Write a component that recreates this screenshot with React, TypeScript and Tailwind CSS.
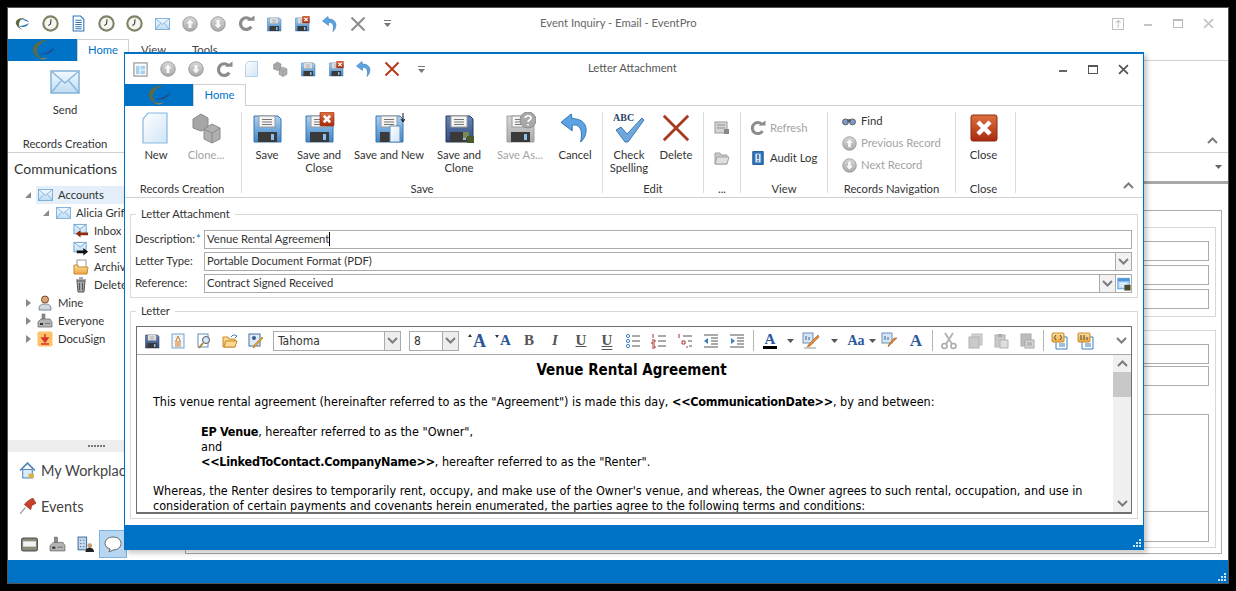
import React from "react";

const S = ({ s = 16, vb = 32, children, className = "" }: { s?: number; vb?: number; children?: React.ReactNode; className?: string }) => (
  <svg width={s} height={s} viewBox={`0 0 ${vb} ${vb}`} className={`block shrink-0 ${className}`}>{children}</svg>
);

const Defs = () => (
  <svg width="0" height="0" className="absolute">
    <defs>
      <linearGradient id="fb" x1="0" y1="0" x2="0" y2="1"><stop offset="0" stopColor="#a9d2f3" /><stop offset="1" stopColor="#3f86c8" /></linearGradient>
      <linearGradient id="fd" x1="0" y1="0" x2="0" y2="1"><stop offset="0" stopColor="#6d86b5" /><stop offset="1" stopColor="#2e4a80" /></linearGradient>
      <linearGradient id="fg" x1="0" y1="0" x2="0" y2="1"><stop offset="0" stopColor="#d8d8d8" /><stop offset="1" stopColor="#a8a8a8" /></linearGradient>
      <linearGradient id="pg" x1="0" y1="0" x2="1" y2="1"><stop offset="0" stopColor="#ffffff" /><stop offset="1" stopColor="#cfe4f6" /></linearGradient>
      <linearGradient id="rd" x1="0" y1="0" x2="0" y2="1"><stop offset="0" stopColor="#e0703f" /><stop offset="1" stopColor="#a92a10" /></linearGradient>
      <linearGradient id="ml" x1="0" y1="0" x2="0" y2="1"><stop offset="0" stopColor="#f3f9fe" /><stop offset="1" stopColor="#bcdcf4" /></linearGradient>
      <linearGradient id="yl" x1="0" y1="0" x2="0" y2="1"><stop offset="0" stopColor="#fde2a3" /><stop offset="1" stopColor="#eda63c" /></linearGradient>
    </defs>
  </svg>
);

const RedX = ({ x = 17, y = 0, w = 14 }: { x?: number; y?: number; w?: number }) => (
  <g>
    <rect x={x} y={y} width={w} height={w} rx="1" fill="url(#rd)" stroke="#8a2a10" strokeWidth="0.6" />
    <path d={`M${x + w * 0.27} ${y + w * 0.27}L${x + w * 0.73} ${y + w * 0.73}M${x + w * 0.73} ${y + w * 0.27}L${x + w * 0.27} ${y + w * 0.73}`} stroke="#fff" strokeWidth="2.6" />
  </g>
);

const Floppy = ({ s = 32, fill = "url(#fb)", edge = "#3d75ad", extra }: { s?: number; fill?: string; edge?: string; extra?: React.ReactNode }) => (
  <S s={s}>
    <path d="M3 4h24l3 3v23H3z" fill={fill} stroke={edge} />
    <rect x="8" y="4" width="16" height="11" fill="#f5f5f5" stroke="#9a9a9a" />
    <path d="M11 7.5h10M11 10h10M11 12.5h10" stroke="#777" />
    <rect x="7" y="20" width="19" height="10" fill="#3a3a3a" />
    <rect x="20" y="22" width="3" height="6" fill="#8fc0ea" />
    {extra}
  </S>
);

const Mail = ({ s = 16, h, stroke = "#6ea4d2" }: { s?: number; h?: number; stroke?: string }) => (
  <svg width={s} height={h ?? s * 0.8} viewBox="0 0 30 24" className="block shrink-0">
    <rect x="1" y="1" width="28" height="22" fill="url(#ml)" stroke={stroke} strokeWidth="1.6" />
    <path d="M1 1l14 12L29 1M1 23l10-12M29 23L19 11" fill="none" stroke={stroke} strokeWidth="1.4" />
  </svg>
);

const Clock = () => (
  <S s={17}>
    <circle cx="16" cy="16" r="13.5" fill="#f6f6f0" stroke="#7d8468" strokeWidth="4" />
    <path d="M17 8l-1 9-4 3" fill="none" stroke="#444" strokeWidth="2.2" />
  </S>
);

const Round = ({ dir = "up", s = 16 }: { dir?: string; s?: number }) => (
  <S s={s}>
    <circle cx="16" cy="16" r="14.5" fill="url(#fg)" stroke="#8a8a8a" strokeWidth="1.5" />
    {dir === "up" ? (
      <path d="M16 7l7 8h-4v9h-6v-9H9z" fill="#fff" fillOpacity=".9" />
    ) : (
      <path d="M16 25l7-8h-4V8h-6v9H9z" fill="#fff" fillOpacity=".9" />
    )}
  </S>
);

const RefreshI = ({ s = 18 }: { s?: number }) => (
  <S s={s}>
    <path d="M25 22a11 11 0 1 1 -1-13" fill="none" stroke="#8c8c8c" strokeWidth="6" />
    <path d="M17 11h14V1z" fill="#8c8c8c" />
  </S>
);

const UndoI = ({ s = 16 }: { s?: number }) => (
  <S s={s}>
    <path d="M12 1L1 10l12 9v-6c7-1 12 3 9 18 9-8 9-25-9-25z" fill="#5ba3e2" stroke="#2f6fb1" strokeWidth="1" />
  </S>
);

const XI = ({ s = 16, c = "#8c8c8c", w = 4 }: { s?: number; c?: string; w?: number }) => (
  <S s={s}>
    <path d="M3 3l26 26M29 3L3 29" stroke={c} strokeWidth={w} />
  </S>
);

const NewI = ({ s = 32 }: { s?: number }) => (
  <S s={s}>
    <path d="M8 1h19v30H3V7z" fill="url(#pg)" stroke="#8bb8df" strokeWidth="1.2" />
  </S>
);

const CloneI = ({ s = 32 }: { s?: number }) => (
  <S s={s}>
    <path d="M3 7l8-5 7 4v10l-7 3-8-3z" fill="#a6a6a6" stroke="#8a8a8a" />
    <path d="M14 17l8-5 8 4v11l-8 4-8-4z" fill="#b0b0b0" stroke="#8a8a8a" />
    <path d="M14 17l8 4 8-5M22 21v10" fill="none" stroke="#8a8a8a" />
  </S>
);

const Machine = ({ s = 16 }: { s?: number }) => (
  <S s={s} vb={16}>
    <rect x="5" y="1" width="3" height="6" fill="#8a8a8a" stroke="#666" strokeWidth=".5" />
    <path d="M1 9l3-3h9l2 3v5H1z" fill="#b4b4b4" stroke="#6f6f6f" strokeWidth=".8" />
    <rect x="3" y="10" width="3" height="2" fill="#333" />
    <rect x="8" y="10" width="5" height="1" fill="#777" />
  </S>
);

const Chevron = ({ up = false, c = "#7d7d7d" }: { up?: boolean; c?: string }) => (
  <svg width="11" height="7" viewBox="0 0 11 7" className="block">
    <path d={up ? "M1 6l4.5-4.5L10 6" : "M1 1l4.5 4.5L10 1"} fill="none" stroke={c} strokeWidth="2" />
  </svg>
);

const DropTri = ({ c = "#555" }: { c?: string }) => (
  <svg width="7" height="4" viewBox="0 0 7 4" className="block"><path d="M0 0h7L3.5 4z" fill={c} /></svg>
);

const QatMore = () => (
  <svg width="7" height="7" viewBox="0 0 7 7" className="block"><path d="M0 0h7v1H0zM0 3h7L3.5 7z" fill="#777" /></svg>
);

const Grip = () => (
  <svg width="10" height="10" viewBox="0 0 10 10" className="block">
    <path d="M7 1h2v2H7zM4 4h2v2H4zM7 4h2v2H7zM1 7h2v2H1zM4 7h2v2H4zM7 7h2v2H7z" fill="#cfe3f5" />
  </svg>
);

const Logo = () => (
  <svg width="34" height="22" viewBox="0 0 34 22" className="block">
    <path d="M22 1C12 1 6 6 7 12c1 5 6 8 12 9-5-2-8-5-8-9 0-5 5-9 11-11z" fill="#5c6b45" />
    <path d="M13 15c5 0 11-3 16-7-2 5-8 9-16 7z" fill="#1f4f8f" />
    <path d="M13 19c4 1 7 0 9-1-3 3-6 3-9 1z" fill="#b08a3a" />
  </svg>
);

const Cell = ({ children, className = "w-[26px]" }: { children?: React.ReactNode; className?: string }) => (
  <div className={`flex items-center justify-center shrink-0 ${className}`}>{children}</div>
);

const WinBtn = ({ children }: { children: React.ReactNode }) => <Cell className="w-[30px]">{children}</Cell>;

const Minus = ({ c }: { c: string }) => <div className={`w-[8px] h-[2px] mt-[3px] ${c}`} />;
const MaxI = ({ c }: { c: string }) => <div className={`w-[10px] h-[9px] border border-t-2 ${c}`} />;

const RibbonBtn = ({ w, icon, label, dim = false }: { w: string; icon: React.ReactNode; label: React.ReactNode; dim?: boolean }) => (
  <div className={`flex flex-col items-center shrink-0 ${w}`}>
    <div className="h-[32px] flex items-center justify-center">{icon}</div>
    <div className={`mt-[4px] text-center leading-[13px] whitespace-nowrap ${dim ? "text-[#a3a3a3]" : "text-[#333]"}`}>{label}</div>
  </div>
);

const Group = ({ w, label, children, lp = "" }: { w: string; label: string; children: React.ReactNode; lp?: string }) => (
  <div className={`flex flex-col shrink-0 border-r border-[#dcdcdc] h-[81px] ${w}`}>
    <div className="flex flex-1">{children}</div>
    <div className={`text-center text-[#333] leading-[13px] h-[13px] mb-[-2px] ${lp}`}>{label}</div>
  </div>
);

const SmallRow = ({ icon, label, dim = false, pl = "pl-[14px]" }: { icon: React.ReactNode; label: string; dim?: boolean; pl?: string }) => (
  <div className={`flex items-center h-[22px] gap-[5px] whitespace-nowrap ${pl} ${dim ? "text-[#a3a3a3]" : "text-[#333]"}`}>
    <div className="w-[14px] flex justify-center">{icon}</div>
    {label}
  </div>
);

const Field = ({ label, value, caret, drop, extra }: { label: React.ReactNode; value: string; caret?: boolean; drop?: boolean; extra?: boolean }) => (
  <div className="flex items-center h-[19px]">
    <div className="w-[69px] ml-[-1px] text-[#333] whitespace-nowrap pb-[1px]">{label}</div>
    <div className="flex-1 h-[19px] border border-[#ababab] flex items-center">
      <div className="flex-1 pl-[2px] pb-[1px] text-[#333] whitespace-nowrap flex items-center">
        {value}
        {caret && <span className="w-px h-[14px] bg-black" />}
      </div>
      {drop && (
        <div className="w-[16px] h-full border-l border-[#ababab] bg-[#f2f2f2] flex items-center justify-center">
          <Chevron />
        </div>
      )}
      {extra && (
        <div className="w-[16px] h-full border-l border-[#ababab] flex items-center justify-center">
          <S s={14}>
            <rect x="2" y="3" width="26" height="24" fill="#bcdcf4" stroke="#4f97da" strokeWidth="2" />
            <rect x="2" y="3" width="26" height="7" fill="#4f97da" />
            <path d="M6 15h16M6 20h16" stroke="#fff" strokeWidth="2" />
            <rect x="17" y="18" width="14" height="13" fill="#4b4b25" />
          </S>
        </div>
      )}
    </div>
  </div>
);

const Legend = ({ children }: { children: string }) => (
  <div className="absolute left-[5px] top-[-8px] bg-white px-[5px] leading-[14px] text-[#333]">{children}</div>
);

const Sep = () => <div className="w-px h-[21px] bg-[#b5b5b5] shrink-0" />;

const Lines = ({ kind }: { kind: string }) => (
  <S s={16} vb={16}>
    {kind === "bul" && (
      <>
        <circle cx="3" cy="3" r="1.6" fill="none" stroke="#3f7fc0" />
        <circle cx="3" cy="8" r="1.6" fill="none" stroke="#3f7fc0" />
        <circle cx="3" cy="13" r="1.6" fill="none" stroke="#3f7fc0" />
        <path d="M7 3h8M7 8h8M7 13h8" stroke="#555" />
      </>
    )}
    {kind === "num" && (
      <>
        <path d="M2 1v4M1 7h3v2H1v2h3M1 13h3v2H1" fill="none" stroke="#a33" />
        <path d="M7 3h8M7 8h8M7 13h8" stroke="#555" />
      </>
    )}
    {kind === "multi" && (
      <>
        <path d="M2 1v4M5 8h3v3H5zM9 14h2" fill="none" stroke="#a33" />
        <path d="M6 3h9M11 8h4M12 13h3" stroke="#555" />
      </>
    )}
    {kind === "out" && (
      <>
        <path d="M1 2h14M8 5h7M8 8h7M8 11h7M1 14h14" stroke="#555" />
        <path d="M1 8l4-3v6z" fill="#3f7fc0" />
      </>
    )}
    {kind === "ind" && (
      <>
        <path d="M1 2h14M8 5h7M8 8h7M8 11h7M1 14h14" stroke="#555" />
        <path d="M6 8L2 5v6z" fill="#3f7fc0" />
      </>
    )}
  </S>
);

const TB = "font-['Liberation_Serif',serif] font-bold text-[#555] text-[15px] leading-none";

const Toolbar = () => (
  <div className="h-[28px] border-b border-[#a8a8a8] flex items-center pl-[2px] pr-[2px] font-['DejaVu_Sans_Condensed','DejaVu_Sans',sans-serif] text-[12px]">
    <Cell><Floppy s={16} fill="url(#fd)" edge="#222c44" /></Cell>
    <Cell>
      <S s={16} vb={16}>
        <rect x="2" y="1" width="12" height="14" fill="#eef5fc" stroke="#6ea4d2" />
        <path d="M8 3l-2.5 6h5zM5 11h6M5 13h6" fill="none" stroke="#d8761e" />
      </S>
    </Cell>
    <Cell>
      <S s={16} vb={16}>
        <rect x="2" y="1" width="10" height="13" fill="#fff" stroke="#5c8fbd" />
        <circle cx="10" cy="7" r="3.5" fill="#d3e8f8" stroke="#555" />
        <path d="M7 10l-4 5" stroke="#b5822c" strokeWidth="2" />
      </S>
    </Cell>
    <Cell>
      <S s={16} vb={16}>
        <path d="M1 4h5l1 2h6v8H1z" fill="url(#yl)" stroke="#c78a2f" />
        <path d="M4 8h11l-2 6H2z" fill="#fcd98f" stroke="#c78a2f" />
        <path d="M9 4c1-2 3-2 4-2l2 1-2 2" fill="none" stroke="#3f7fc0" />
      </S>
    </Cell>
    <Cell>
      <S s={16} vb={16}>
        <rect x="1" y="1" width="11" height="12" fill="#dcebf8" stroke="#4a6fa5" />
        <circle cx="6" cy="5" r="2" fill="#3b5a8c" />
        <path d="M15 5L7 14l-2 1 1-3 8-8z" fill="#e5a63c" stroke="#a4701c" strokeWidth=".6" />
      </S>
    </Cell>
    <div className="ml-[4px] w-[128px] h-[20px] border border-[#ababab] flex items-center">
      <div className="flex-1 pl-[4px] text-[#333]">Tahoma</div>
      <div className="w-[16px] h-full bg-[#eeeeee] border-l border-[#ababab] flex items-center justify-center"><Chevron /></div>
    </div>
    <div className="ml-[8px] w-[50px] h-[20px] border border-[#ababab] flex items-center">
      <div className="flex-1 pl-[4px] text-[#333]">8</div>
      <div className="w-[16px] h-full bg-[#eeeeee] border-l border-[#ababab] flex items-center justify-center"><Chevron /></div>
    </div>
    <Cell className="w-[26px] ml-[5px]">
      <div className="flex items-start">
        <div className="w-0 h-0 mt-[2px] mr-[1px] border-x-[2px] border-x-transparent border-b-[3px] border-b-[#333]" />
        <span className="font-['Liberation_Serif',serif] font-bold text-[#2b579a] text-[18px] leading-none">A</span>
      </div>
    </Cell>
    <Cell>
      <div className="flex items-start">
        <div className="w-0 h-0 mt-[2px] mr-[1px] border-x-[2px] border-x-transparent border-t-[3px] border-t-[#333]" />
        <span className="font-['Liberation_Serif',serif] font-bold text-[#2b579a] text-[15px] leading-none">A</span>
      </div>
    </Cell>
    <Cell><span className={TB}>B</span></Cell>
    <Cell><span className={`${TB} italic`}>I</span></Cell>
    <Cell><span className={`${TB} underline`}>U</span></Cell>
    <Cell><span className={`${TB} underline decoration-double`}>U</span></Cell>
    <Cell><Lines kind="bul" /></Cell>
    <Cell><Lines kind="num" /></Cell>
    <Cell><Lines kind="multi" /></Cell>
    <Cell><Lines kind="out" /></Cell>
    <Cell><Lines kind="ind" /></Cell>
    <div className="ml-[3px] mr-[3px]"><Sep /></div>
    <Cell>
      <div className="flex flex-col items-center">
        <span className="font-['Liberation_Serif',serif] font-bold text-[#2b579a] text-[15px] leading-[14px]">A</span>
        <div className="w-[14px] h-[3px] bg-black" />
      </div>
    </Cell>
    <Cell className="w-[15px]"><DropTri /></Cell>
    <Cell>
      <S s={18} vb={18}>
        <rect x="1" y="1" width="10" height="10" fill="#d6e6f6" stroke="#6f8fb3" />
        <path d="M4 8V4M7 8V5" stroke="#3a5f8a" />
        <path d="M16 3L7 12l-2 3 3-1 9-9z" fill="#e58a3c" stroke="#a55f1c" strokeWidth=".6" />
        <path d="M2 15h12v2H2z" fill="#c9c9c9" />
      </S>
    </Cell>
    <Cell className="w-[20px]"><DropTri /></Cell>
    <Cell className="w-[24px]"><span className="font-['Liberation_Serif',serif] font-bold text-[#2b579a] text-[14px] leading-none">Aa</span></Cell>
    <Cell className="w-[9px]"><DropTri /></Cell>
    <Cell>
      <S s={18} vb={18}>
        <rect x="1" y="1" width="10" height="10" fill="#d6e6f6" stroke="#6f8fb3" />
        <path d="M4 8V4M7 8V5" stroke="#3a5f8a" />
        <path d="M16 6l-6 6-3 3 1-3 5-6z" fill="#e58a3c" stroke="#a55f1c" strokeWidth=".6" />
      </S>
    </Cell>
    <Cell><span className="font-['Liberation_Serif',serif] font-bold text-[#2b579a] text-[17px] leading-none">A</span></Cell>
    <div className="ml-[3px] mr-[3px]"><Sep /></div>
    <Cell>
      <S s={18} vb={18}>
        <path d="M5 1l7 11M13 1L6 12" stroke="#b5b5b5" strokeWidth="2" />
        <circle cx="4.5" cy="14" r="2.5" fill="none" stroke="#aaa" strokeWidth="1.6" />
        <circle cx="13.5" cy="14" r="2.5" fill="none" stroke="#aaa" strokeWidth="1.6" />
      </S>
    </Cell>
    <Cell>
      <S s={16} vb={16}>
        <rect x="5" y="1" width="10" height="11" fill="#d2d2d2" stroke="#bbb" />
        <rect x="2" y="4" width="10" height="11" fill="#c9c9c9" stroke="#b2b2b2" />
      </S>
    </Cell>
    <Cell>
      <S s={16} vb={16}>
        <rect x="2" y="2" width="10" height="12" fill="#c9c9c9" stroke="#b2b2b2" />
        <rect x="5" y="1" width="4" height="3" fill="#aaa" />
        <rect x="7" y="7" width="8" height="8" fill="#dedede" stroke="#b2b2b2" />
      </S>
    </Cell>
    <Cell>
      <S s={16} vb={16}>
        <rect x="2" y="1" width="10" height="12" fill="#bdbdbd" stroke="#aaa" />
        <rect x="6" y="7" width="9" height="8" fill="#d5d5d5" stroke="#aaa" />
        <path d="M8 10h5M8 12h5" stroke="#999" />
      </S>
    </Cell>
    <div className="ml-[3px] mr-[3px]"><Sep /></div>
    <Cell>
      <S s={18} vb={18}>
        <path d="M7 5h9v12H5V8z" fill="#fff" stroke="#3f7fc0" />
        <rect x="1" y="1" width="12" height="9" rx="1" fill="url(#yl)" stroke="#c78a2f" />
        <path d="M5 3l-1.5 2.5L5 8M9 3l1.5 2.5L9 8" fill="none" stroke="#444" />
        <path d="M8 12h6M8 14h6" stroke="#3f7fc0" />
      </S>
    </Cell>
    <Cell>
      <S s={18} vb={18}>
        <path d="M7 5h9v12H5V8z" fill="#fff" stroke="#3f7fc0" />
        <rect x="1" y="1" width="12" height="9" rx="1" fill="url(#yl)" stroke="#c78a2f" />
        <path d="M4 3v5M7 3v5M10 5v3" fill="none" stroke="#444" />
        <path d="M8 12h6M8 14h6" stroke="#3f7fc0" />
      </S>
    </Cell>
    <div className="flex-1 flex justify-end pr-[2px]"><Chevron /></div>
  </div>
);

const Doc = () => (
  <div className="flex-1 flex min-h-0">
    <div className="flex-1 overflow-hidden pl-[16px] pt-[6px] font-['DejaVu_Sans_Condensed','DejaVu_Sans',sans-serif] text-black text-[12.5px] leading-[15px]">
      <div className="text-center font-bold text-[15px] leading-[18px] mb-[15px] pr-[3px]">Venue Rental Agreement</div>
      <div className="whitespace-nowrap">This venue rental agreement (hereinafter referred to as the "Agreement") is made this day, <b className="tracking-[-0.25px]">&lt;&lt;CommunicationDate&gt;&gt;</b>, by and between:</div>
      <div className="pl-[48px] mt-[15px] whitespace-nowrap">
        <div><b className="tracking-[-0.25px]">EP Venue</b>, hereafter referred to as the "Owner",</div>
        <div>and</div>
        <div><b className="tracking-[-0.25px]">&lt;&lt;LinkedToContact.CompanyName&gt;&gt;</b>, hereafter referred to as the "Renter".</div>
      </div>
      <div className="mt-[14px] whitespace-nowrap">
        <div>Whereas, the Renter desires to temporarily rent, occupy, and make use of the Owner's venue, and whereas, the Owner agrees to such rental, occupation, and use in</div>
        <div>consideration of certain payments and covenants herein enumerated, the parties agree to the following terms and conditions:</div>
      </div>
    </div>
    <div className="w-[18px] shrink-0 bg-[#f0f0f0] flex flex-col">
      <div className="h-[17px] flex items-center justify-center"><Chevron up /></div>
      <div className="h-[25px] bg-[#c8c8c8]" />
      <div className="flex-1" />
      <div className="h-[17px] flex items-center justify-center"><Chevron /></div>
    </div>
  </div>
);

const Dialog = () => (
  <div className="absolute left-[124px] top-[52px] w-[1020px] h-[498px] bg-white border border-[#0072c6] border-t-2 shadow-[3px_3px_5px_rgba(0,0,0,0.22)] flex flex-col">
    <div className="h-[30px] flex items-center pl-[1px] relative shrink-0">
      {[
        <S s={15} vb={16} key="a"><rect x="1" y="1" width="14" height="14" fill="#fff" stroke="#777" /><rect x="3" y="4" width="4" height="9" fill="#a8d1ee" /><rect x="8" y="4" width="5" height="4" fill="#a8d1ee" /><rect x="8" y="9" width="5" height="4" fill="#a8d1ee" /></S>,
        <Round key="b" dir="up" />,
        <Round key="c" dir="down" />,
        <RefreshI key="d" s={17} />,
        <NewI key="e" s={16} />,
        <CloneI key="f" s={16} />,
        <Floppy key="g" s={16} />,
        <Floppy key="h" s={16} extra={<RedX />} />,
        <UndoI key="i" />,
        <XI key="j" c="#b63a1c" />,
      ].map((ic, i) => (
        <Cell key={i} className="w-[28px]">{ic}</Cell>
      ))}
      <Cell className="w-[30px]"><QatMore /></Cell>
      <div className="absolute left-[463px] top-[6px] text-[#555] leading-[16px]">Letter Attachment</div>
      <div className="ml-auto flex items-center pr-[5px]">
        <WinBtn><Minus c="bg-[#666]" /></WinBtn>
        <WinBtn><MaxI c="border-[#555]" /></WinBtn>
        <WinBtn><XI s={11} c="#555" w={5} /></WinBtn>
      </div>
    </div>
    <div className="h-[22px] flex border-b border-[#d0d0d0] shrink-0">
      <div className="w-[68px] h-[22px] bg-[#0072c6] flex items-center justify-center"><Logo /></div>
      <div className="w-[53px] h-[22px] bg-white border border-b-0 border-[#d0d0d0] text-[#0072c6] flex items-center justify-center">Home</div>
    </div>
    <div className="h-[92px] shrink-0 border-b border-[#d0d0d0] flex items-start pt-[6px] relative">
      <div className="w-[6px]" />
      <Group w="w-[111px]" label="Records Creation" lp="pr-[8px]">
        <RibbonBtn w="w-[50px]" icon={<NewI />} label="New" />
        <RibbonBtn w="w-[50px]" icon={<CloneI />} label="Clone..." dim />
      </Group>
      <Group w="w-[361px]" label="Save">
        <RibbonBtn w="w-[50px]" icon={<Floppy />} label="Save" />
        <RibbonBtn w="w-[54px]" icon={<Floppy extra={<RedX />} />} label={<>Save and<br />Close</>} />
        <RibbonBtn w="w-[86px]" icon={<Floppy extra={<><path d="M17 14h10v16H17z" fill="url(#pg)" stroke="#5c8fbd" /><path d="M30 1v8M28 7l2 3 2-3" stroke="#111" fill="none" /></>} />} label="Save and New" />
        <RibbonBtn w="w-[54px]" icon={<Floppy fill="url(#fd)" edge="#27395f" extra={<><rect x="20" y="20" width="6" height="6" fill="#7a8a50" /><rect x="24" y="24" width="7" height="7" fill="#4c5a2b" /></>} />} label={<>Save and<br />Clone</>} />
        <RibbonBtn w="w-[68px]" icon={<Floppy fill="url(#fg)" edge="#a0a0a0" extra={<><circle cx="24" cy="8" r="8" fill="#a9a9a9" stroke="#8c8c8c" /><path d="M21 6c1-3 6-3 6 0 0 2-3 2-3 4M24 12v1.5" fill="none" stroke="#fff" strokeWidth="1.6" /></>} />} label="Save As..." dim />
        <RibbonBtn w="w-[42px]" icon={<UndoI s={30} />} label="Cancel" />
      </Group>
      <Group w="w-[101px]" label="Edit">
        <RibbonBtn
          w="w-[52px]"
          icon={
            <div className="relative w-[32px] h-[32px]">
              <svg width="32" height="32" viewBox="0 0 32 32" className="block"><path d="M3 18l5-3 6 7L29 6l2 2-16 22h-3z" fill="#6fa9dc" stroke="#3f78b5" /></svg>
              <span className="absolute left-0 top-0 text-[10px] leading-[11px] font-bold text-[#2b3f66] font-['Liberation_Serif',serif]">ABC</span>
            </div>
          }
          label={<>Check<br />Spelling</>}
        />
        <RibbonBtn w="w-[42px]" icon={<XI s={30} c="#a8391e" w={3} />} label="Delete" />
      </Group>
      <Group w="w-[37px]" label="...">
        <div className="w-full flex flex-col items-center pt-[8px] gap-[14px]">
          <S s={16} vb={16}>
            <rect x="1" y="2" width="12" height="11" fill="#d5d5d5" stroke="#9c9c9c" />
            <path d="M3 5h8M3 8h8" stroke="#8f8f8f" />
            <rect x="10" y="9" width="5" height="5" fill="#888" />
          </S>
          <S s={16} vb={16}>
            <path d="M1 3h5l1 2h6v9H1z" fill="#c8c8c8" stroke="#a3a3a3" />
            <path d="M3 7h12l-2 7H1z" fill="#dedede" stroke="#a3a3a3" />
          </S>
        </div>
      </Group>
      <Group w="w-[87px]" label="View">
        <div className="flex flex-col pt-[5px] gap-[8px]">
          <SmallRow icon={<RefreshI s={16} />} label="Refresh" dim pl="pl-[10px]" />
          <SmallRow
            icon={
              <S s={14} vb={16}>
                <rect x="2" y="0" width="12" height="16" rx="1" fill="#2f74b8" stroke="#1f4f8f" />
                <rect x="5" y="3" width="6" height="10" fill="#cfe4f6" />
                <path d="M8 4v5M8 10.5v1.5" stroke="#1f4f8f" strokeWidth="1.6" />
              </S>
            }
            label="Audit Log"
            pl="pl-[10px]"
          />
        </div>
      </Group>
      <Group w="w-[128px]" label="Records Navigation">
        <div className="flex flex-col mt-[-2px]">
          <SmallRow
            icon={
              <S s={14} vb={16}>
                <circle cx="4" cy="9" r="3.4" fill="#7d9bd0" stroke="#555" />
                <circle cx="12" cy="9" r="3.4" fill="#7d9bd0" stroke="#555" />
                <rect x="6" y="6" width="4" height="3" fill="#555" />
              </S>
            }
            label="Find"
          />
          <SmallRow icon={<Round dir="up" s={15} />} label="Previous Record" dim />
          <SmallRow icon={<Round dir="down" s={15} />} label="Next Record" dim />
        </div>
      </Group>
      <Group w="w-[60px]" label="Close" lp="pr-[4px]">
        <div className="w-full pr-[4px]">
          <RibbonBtn
            w="w-full"
            icon={
              <svg width="28" height="28" viewBox="0 0 28 28" className="block">
                <rect x="1" y="1" width="26" height="26" rx="2" fill="url(#rd)" stroke="#8a2a10" />
                <path d="M8 8l12 12M20 8L8 20" stroke="#fff" strokeWidth="4.5" />
              </svg>
            }
            label="Close"
          />
        </div>
      </Group>
      <div className="flex-1 flex justify-end items-end self-stretch pr-[9px] pb-[8px]"><Chevron up /></div>
    </div>
    <div className="flex-1 min-h-0 px-[5px] pt-[16px] flex flex-col">
      <div className="relative border border-[#d8d8d8] h-[84px] px-[5px] pt-[15px] flex flex-col gap-[3px] shrink-0">
        <Legend>Letter Attachment</Legend>
        <Field label={<>Description:<span className="text-[#0072c6] pl-[1px]">*</span></>} value="Venue Rental Agreement" caret />
        <Field label="Letter Type:" value="Portable Document Format (PDF)" drop />
        <Field label="Reference:" value="Contract Signed Received" drop extra />
      </div>
      <div className="relative border border-[#d8d8d8] mt-[13px] h-[208px] px-[5px] pt-[14px] pb-[4px] flex flex-col shrink-0">
        <Legend>Letter</Legend>
        <div className="flex-1 min-h-0 border border-[#707070] border-b-2 flex flex-col">
          <Toolbar />
          <Doc />
        </div>
      </div>
    </div>
    <div className="h-[24px] bg-[#0072c6] shrink-0 flex items-end justify-end pr-[1px] pb-[1px] mt-[6px]"><Grip /></div>
  </div>
);

const TreeRow = ({ pl, icon, label, arrow, sel = false }: { pl: string; icon: React.ReactNode; label: string; arrow?: "open" | "closed"; sel?: boolean }) => (
  <div className={`h-[18px] flex items-center whitespace-nowrap ${pl}`}>
    <div className="w-[10px] flex justify-center mr-[3px]">
      {arrow === "open" && <div className="w-0 h-0 border-l-[6px] border-l-transparent border-b-[6px] border-b-[#8a8a8a]" />}
      {arrow === "closed" && <div className="w-0 h-0 border-y-[4px] border-y-transparent border-l-[5px] border-l-[#8a8a8a]" />}
    </div>
    <div className={`flex items-center gap-[5px] h-full pl-[1px] pr-[8px] ${sel ? "bg-[#e4eff9] w-[90px]" : ""}`}>
      <div className="w-[16px] flex justify-center">{icon}</div>
      <span className="text-[#333]">{label}</span>
    </div>
  </div>
);

const MailArrow = ({ c, left }: { c: string; left: boolean }) => (
  <svg width="17" height="16" viewBox="0 0 17 16" className="block">
    <rect x="1" y="1" width="13" height="10" fill="url(#ml)" stroke="#6ea4d2" />
    <path d="M1 1l6.5 5L14 1" fill="none" stroke="#6ea4d2" />
    <path d={left ? "M3 11l5-4v2.5h8v3H8V15z" : "M16 11l-5-4v2.5H4v3h7V15z"} fill={c} />
  </svg>
);

const Sidebar = () => (
  <div className="w-[177px] shrink-0 flex flex-col">
    <div className="h-[31px] mb-[2px] flex items-center pl-[6px] text-[14px] text-[#333] whitespace-nowrap">Communications</div>
    <div className="h-[254px] overflow-hidden">
      <TreeRow pl="pl-[15px]" arrow="open" sel label="Accounts" icon={<Mail s={15} />} />
      <TreeRow pl="pl-[33px]" arrow="open" label="Alicia Griffin" icon={<Mail s={15} />} />
      <TreeRow pl="pl-[51px]" label="Inbox" icon={<MailArrow c="#8c2a10" left />} />
      <TreeRow pl="pl-[51px]" label="Sent" icon={<MailArrow c="#111" left={false} />} />
      <TreeRow
        pl="pl-[51px]"
        label="Archive"
        icon={
          <S s={16} vb={16}>
            <rect x="4" y="1" width="9" height="8" fill="#fff" stroke="#999" />
            <path d="M1 6h4v2h10l-1 7H1z" fill="url(#yl)" stroke="#c78a2f" />
          </S>
        }
      />
      <TreeRow
        pl="pl-[51px]"
        label="Deleted"
        icon={
          <S s={16} vb={16}>
            <path d="M4 4h8l-1 11H5z" fill="#a8a8a8" stroke="#555" />
            <path d="M3 3h10M6 1h4M6.5 6v7M9.5 6v7" stroke="#555" fill="none" />
          </S>
        }
      />
      <TreeRow
        pl="pl-[15px]"
        arrow="closed"
        label="Mine"
        icon={
          <S s={16} vb={16}>
            <circle cx="8" cy="4.5" r="3.5" fill="#d8a67a" stroke="#7a4a2a" />
            <path d="M2 15c0-5 2-6 6-6s6 1 6 6z" fill="#d2d8e0" stroke="#7a8694" />
          </S>
        }
      />
      <TreeRow pl="pl-[15px]" arrow="closed" label="Everyone" icon={<Machine />} />
      <TreeRow
        pl="pl-[15px]"
        arrow="closed"
        label="DocuSign"
        icon={
          <svg width="16" height="16" viewBox="0 0 16 16" className="block">
            <rect x="0.5" y="0.5" width="15" height="15" rx="2" fill="#fdc169" />
            <path d="M8 3v6M5 7l3 4 3-4z M4 13h8" fill="#d8322a" stroke="#d8322a" strokeWidth="1.4" />
          </svg>
        }
      />
    </div>
    <div className="h-[12px] bg-[#eeeeee] flex items-center justify-center gap-[1px] shrink-0">
      {[0, 1, 2, 3, 4, 5].map((i) => (
        <div key={i} className="w-[2px] h-[2px] bg-[#777]" />
      ))}
    </div>
    <div className="h-[36px] pt-[1px] flex items-center pl-[11px] gap-[5px] text-[14.5px] text-[#444] whitespace-nowrap">
      <S s={17} vb={16}>
        <path d="M1 8l7-7 7 7" fill="none" stroke="#4f86bc" strokeWidth="1.6" />
        <rect x="3.5" y="7" width="9" height="8" fill="#dcebf8" stroke="#4f86bc" />
        <rect x="9" y="11" width="5" height="4" fill="#d8b04a" />
      </S>
      My Workplace
    </div>
    <div className="h-[36px] pt-[1px] flex items-center pl-[11px] gap-[5px] text-[14.5px] text-[#444] whitespace-nowrap">
      <S s={17} vb={16}>
        <path d="M8 3l5-3 3 5-4 2-1 4-6-5z" fill="#c8412a" stroke="#8a2a10" strokeWidth=".6" />
        <path d="M6 9l-5 6" stroke="#999" strokeWidth="1.2" />
      </S>
      Events
    </div>
    <div className="flex-1 flex items-end pl-[7px] pb-[2px]">
      <Cell className="w-[28px] h-[28px]">
        <S s={17} vb={16}>
          <rect x="0.5" y="2" width="15" height="12" rx="2" fill="#8a8a7a" stroke="#555" />
          <rect x="2" y="5" width="12" height="5" fill="#f2f2f2" />
        </S>
      </Cell>
      <Cell className="w-[28px] h-[28px]"><Machine s={17} /></Cell>
      <Cell className="w-[28px] h-[28px]">
        <S s={17} vb={16}>
          <rect x="1" y="1" width="8" height="12" fill="#c4d8ec" stroke="#46709c" />
          <path d="M3 4h1M6 4h1M3 7h1M6 7h1M3 10h1M6 10h1" stroke="#46709c" />
          <circle cx="12" cy="9" r="2.2" fill="#c89a70" />
          <path d="M8 15c0-3 2-4 4-4s4 1 4 4z" fill="#222" />
        </S>
      </Cell>
      <Cell className="w-[28px] h-[28px] bg-[#b6d6f2] border border-[#7fb2de]">
        <S s={18} vb={18}>
          <path d="M9 2c5 0 8 3 8 6.5S14 15 9 15l-4 2 1-3C3 13 1 11 1 8.5 1 5 4 2 9 2z" fill="#fff" stroke="#666" />
        </S>
      </Cell>
    </div>
  </div>
);

const Input = ({ cls = "" }: { cls?: string }) => <div className={`border border-[#ababab] h-[20px] ${cls}`} />;

const RightPane = () => (
  <div className="flex-1 min-w-0 flex flex-col">
    <div className="h-[28px] border-b-[3px] border-[#a8a8a8] shrink-0 box-content flex items-center justify-end pr-[6px]">
      <DropTri c="#666" />
    </div>
    <div className="flex-1 pt-[26px] pr-[6px] pb-[6px] pl-0">
      <div className="h-full border border-[#ababab] px-[5px] pt-[16px] pb-[5px] flex flex-col gap-[13px]">
        <div className="border border-[#d8d8d8] h-[90px] px-[6px] pt-[13px] flex flex-col gap-[4px]">
          <Input />
          <Input />
          <Input />
        </div>
        <div className="border border-[#d8d8d8] flex-1 px-[6px] pt-[13px] flex flex-col">
          <Input />
          <Input cls="mt-[2px]" />
          <div className="mt-[28px] border border-[#ababab] h-[128px] flex flex-col">
            <div className="h-[97px] border-b border-[#ababab]" />
          </div>
        </div>
      </div>
    </div>
  </div>
);

export default function App() {
  return (
    <div className="relative w-full h-[591px] bg-black overflow-hidden pl-[7px] pt-[7px] font-['Lato','Noto_Sans',sans-serif] text-[11.25px]">
      <Defs />
      <div className="w-[1222px] h-[577px] bg-white border border-[#555] flex flex-col">
        <div className="h-[31px] shrink-0 flex items-center pl-[0px] relative">
          {[
            <svg key="0" width="16" height="14" viewBox="0 0 16 14" className="block"><path d="M9 1C4 1 1 4 2 7c1 3 4 5 7 6-3-2-4-3-4-6 0-3 2-5 6-6z" fill="#5c6b45" /><path d="M5 9c4 0 7-1 10-3-2 4-6 5-10 3z" fill="#1f6fb8" /><path d="M8 2c3 0 6 1 7 3-2-1-4-1-7-3z" fill="#1f6fb8" /></svg>,
            <Clock key="1" />,
            <S key="2" s={17} vb={16}><path d="M3 1h7l3 3v11H3z" fill="#fff" stroke="#2f74b8" /><path d="M5 5h6M5 7h6M5 9h6M5 11h6M5 13h6" stroke="#2f74b8" /></S>,
            <Clock key="3" />,
            <Clock key="4" />,
            <Mail key="5" s={15} />,
            <Round key="6" dir="up" />,
            <Round key="7" dir="down" />,
            <RefreshI key="8" s={17} />,
            <Floppy key="9" s={16} />,
            <Floppy key="10" s={16} extra={<RedX />} />,
            <UndoI key="11" />,
            <XI key="12" />,
          ].map((ic, i) => (
            <Cell key={i} className="w-[28px]">{ic}</Cell>
          ))}
          <Cell className="w-[30px]"><QatMore /></Cell>
          <div className="absolute left-[532px] top-[7px] text-[#666] leading-[16px] whitespace-nowrap">Event Inquiry - Email - EventPro</div>
          <div className="ml-auto flex items-center pr-[5px]">
            <WinBtn>
              <div className="w-[12px] h-[12px] border border-[#c0c0c0] flex items-center justify-center text-[9px] leading-none text-[#b0b0b0]">↑</div>
            </WinBtn>
            <WinBtn><Minus c="bg-[#c4c4c4]" /></WinBtn>
            <WinBtn><MaxI c="border-[#bbbbbb]" /></WinBtn>
            <WinBtn><XI s={11} c="#c4c4c4" w={5} /></WinBtn>
          </div>
        </div>
        <div className="h-[22px] shrink-0 flex border-b border-[#d0d0d0]">
          <div className="w-[69px] h-[22px] bg-[#0072c6] flex items-center justify-center"><Logo /></div>
          <div className="w-[52px] h-[22px] bg-white border border-b-0 border-[#d0d0d0] text-[#0072c6] flex items-center justify-center">Home</div>
          <div className="ml-[12px] text-[#444] leading-[22px]">View</div>
          <div className="ml-[26px] text-[#444] leading-[22px]">Tools</div>
        </div>
        <div className="h-[92px] shrink-0 border-b border-[#d0d0d0] flex items-start relative">
          <div className="w-[114px] h-full flex flex-col items-center">
            <div className="mt-[9px]"><Mail s={30} h={24} stroke="#8ab6da" /></div>
            <div className="mt-[9px] text-[#333] leading-[14px]">Send</div>
            <div className="mt-[20px] text-[#333] leading-[14px] whitespace-nowrap">Records Creation</div>
          </div>
          <div className="flex-1 h-full flex justify-end items-end pr-[10px] pb-[8px]"><Chevron up /></div>
        </div>
        <div className="flex-1 min-h-0 flex">
          <Sidebar />
          <RightPane />
        </div>
        <div className="h-[23px] shrink-0 bg-[#0072c6] flex items-end justify-end pr-[1px] pb-[1px]"><Grip /></div>
      </div>
      <Dialog />
    </div>
  );
}
